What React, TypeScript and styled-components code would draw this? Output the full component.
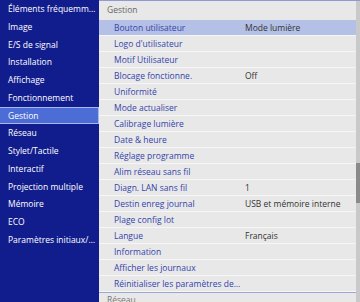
import React from "react";
import styled, {createGlobalStyle} from "styled-components";

// menu data: left categories, right sub-items of the open category
const categories = [
    "Éléments fréquemment utilisés",
    "Image",
    "E/S de signal",
    "Installation",
    "Affichage",
    "Fonctionnement",
    "Gestion",
    "Réseau",
    "Stylet/Tactile",
    "Interactif",
    "Projection multiple",
    "Mémoire",
    "ECO",
    "Paramètres initiaux/tout",
];

const items: { label: string; value?: string }[] = [
    {label: "Bouton utilisateur", value: "Mode lumière"},
    {label: "Logo d'utilisateur"},
    {label: "Motif Utilisateur"},
    {label: "Blocage fonctionne.", value: "Off"},
    {label: "Uniformité"},
    {label: "Mode actualiser"},
    {label: "Calibrage lumière"},
    {label: "Date & heure"},
    {label: "Réglage programme"},
    {label: "Alim réseau sans fil"},
    {label: "Diagn. LAN sans fil", value: "1"},
    {label: "Destin enreg journal", value: "USB et mémoire interne"},
    {label: "Plage config lot"},
    {label: "Langue", value: "Français"},
    {label: "Information"},
    {label: "Afficher les journaux"},
    {label: "Réinitialiser les paramètres de gestion"},
];

const App = () => {
    return (
        <>
            <GlobalStyle/>
            <Screen>
                <Sidebar>
                    {categories.map((c) => (
                        <Category key={c} $active={c === "Gestion"}>{c}</Category>
                    ))}
                </Sidebar>
                <Panel>
                    <List>
                        <PanelHeader>Gestion</PanelHeader>
                        {items.map((it, i) => (
                            <Row key={it.label} $selected={i === 0}>
                                <Label>{it.label}</Label>
                                <Value>{it.value}</Value>
                            </Row>
                        ))}
                        <NextHeader>Réseau</NextHeader>
                    </List>
                    <ScrollTrack>
                        <ScrollThumb/>
                    </ScrollTrack>
                </Panel>
            </Screen>
        </>
    )
};

const GlobalStyle = createGlobalStyle`
  html, body {
    margin: 0;
    padding: 0;
    width: 360px;
    height: 302px;
    overflow: hidden;
  }
`;

const Screen = styled.div`
  display: flex;
  width: 360px;
  height: 302px;
  overflow: hidden;
  font-family: 'Open Sans', 'Noto Sans', sans-serif;
  font-size: 8.5px;
`;

const Sidebar = styled.div`
  width: 99px;
  flex-shrink: 0;
  background: #121d8d;
  display: flex;
  flex-direction: column;
`;

const Category = styled.div<{ $active?: boolean }>`
  height: 17.75px;
  box-sizing: border-box;
  padding: 0 3px 0 8px;
  color: #ffffff;
  white-space: nowrap;
  overflow: hidden;
  text-overflow: ellipsis;
  line-height: ${p => p.$active ? "15.75px" : "17.75px"};
  background: ${p => p.$active ? "#4d6dd6" : "transparent"};
  border: ${p => p.$active ? "1px solid #a8b8f0" : "none"};
  border-left: none;
`;

const Panel = styled.div`
  flex: 1;
  display: flex;
  background: #e8e8e8;
  border-top: 1px solid #8e9bd2;
`;

const List = styled.div`
  flex: 1;
  display: flex;
  flex-direction: column;
`;

const PanelHeader = styled.div`
  height: 19px;
  line-height: 17px;
  padding-left: 8px;
  color: #666666;
  flex-shrink: 0;
`;

const Row = styled.div<{ $selected?: boolean }>`
  height: 16px;
  flex-shrink: 0;
  box-sizing: border-box;
  display: grid;
  grid-template-columns: 146px 1fr;
  align-items: center;
  background: ${p => p.$selected ? "#b4c0e6" : "transparent"};
  border-bottom: 1px solid #f6f6f6;
`;

const Label = styled.span`
  padding-left: 15px;
  padding-right: 3px;
  color: #3443aa;
  white-space: nowrap;
  overflow: hidden;
  text-overflow: ellipsis;
`;

const Value = styled.span`
  color: #333333;
  white-space: nowrap;
`;

const NextHeader = styled.div`
  border-top: 1px solid #9aa6d6;
  padding-left: 8px;
  line-height: 14px;
  color: #777777;
  flex-shrink: 0;
`;

const ScrollTrack = styled.div`
  width: 4px;
  flex-shrink: 0;
  background: #c9c9c9;
  display: flex;
  flex-direction: column;
`;

const ScrollThumb = styled.div`
  margin-top: 162px;
  height: 40px;
  background: #8a8a8a;
`;

export default App;
